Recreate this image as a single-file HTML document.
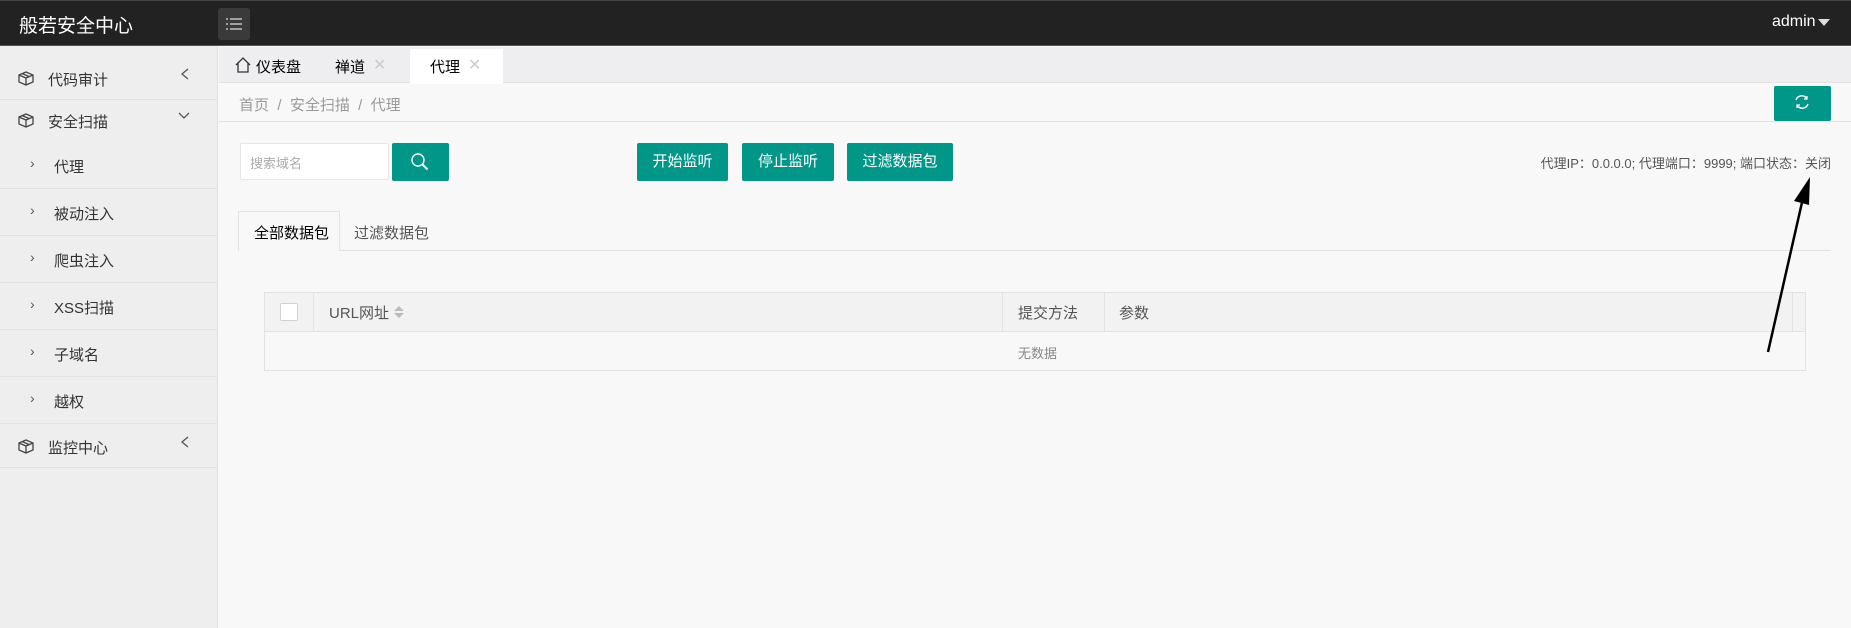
<!DOCTYPE html>
<html><head><meta charset="utf-8"><style>
*{box-sizing:border-box;margin:0;padding:0}
body{width:1851px;height:628px;overflow:hidden;background:#f8f8f8;font-family:"Liberation Sans","Noto Sans CJK SC",sans-serif;color:#333;position:relative}
.abs{position:absolute}
.hdr{left:0;top:0;width:1851px;height:46px;background:#222;border-top:1px solid #444;border-bottom:1px solid #555}
.side{left:0;top:46px;width:218px;height:582px;background:#eeeeee;border-right:1px solid #e0e0e0}
.btn{position:absolute;background:#009688;color:#fff;font-size:15px;text-align:center;border-radius:2px}
.line{position:absolute;background:#e2e2e2;height:1px}
</style></head><body>
<div class="abs hdr"></div>
<div class="abs" style="left:19px;top:11px;font-size:19px;color:#fff">般若安全中心</div>
<div class="abs" style="left:218px;top:8px;width:32px;height:32px;background:#3a3a3a;border-radius:3px"></div>
<svg class="abs" style="left:226px;top:17px" width="16" height="14"><g stroke="#ddd" stroke-width="1.3"><path d="M0 2h2M4 2h12M0 7h2M4 7h12M0 12h2M4 12h12"/></g></svg>
<div class="abs" style="left:1772px;top:13px;font-size:16px;color:#fff">admin</div>
<div class="abs" style="left:1818px;top:19px;width:0;height:0;border-left:6px solid transparent;border-right:6px solid transparent;border-top:7px solid #ddd"></div>

<div class="abs side"></div>
<div class="line" style="left:0;top:99px;width:218px"></div>
<div class="line" style="left:0;top:423px;width:218px"></div>
<div class="line" style="left:0;top:467px;width:218px"></div>
<div class="line" style="left:0;top:188px;width:218px"></div>
<div class="line" style="left:0;top:235px;width:218px"></div>
<div class="line" style="left:0;top:282px;width:218px"></div>
<div class="line" style="left:0;top:329px;width:218px"></div>
<div class="line" style="left:0;top:376px;width:218px"></div>
<svg class="abs" style="left:17px;top:70px" width="18" height="16"><path d="M2 5l7-3 7 3v7l-7 3-7-3zM2 5l7 3 7-3M9 8v7M5 3.5l7 3" fill="none" stroke="#444" stroke-width="1.3"/></svg>
<div class="abs" style="left:48px;top:69px;font-size:15px">代码审计</div>
<svg class="abs" style="left:181px;top:68px" width="8" height="12"><path d="M7 1L1 6l6 5" fill="none" stroke="#555" stroke-width="1.3"/></svg>
<svg class="abs" style="left:17px;top:112px" width="18" height="16"><path d="M2 5l7-3 7 3v7l-7 3-7-3zM2 5l7 3 7-3M9 8v7M5 3.5l7 3" fill="none" stroke="#444" stroke-width="1.3"/></svg>
<div class="abs" style="left:48px;top:111px;font-size:15px">安全扫描</div>
<svg class="abs" style="left:178px;top:112px" width="12" height="8"><path d="M1 1l5 5 5-5" fill="none" stroke="#555" stroke-width="1.3"/></svg>
<div class="abs" style="left:30px;top:155px;font-size:14px;color:#555">›</div><div class="abs" style="left:54px;top:156px;font-size:15px">代理</div>
<div class="abs" style="left:30px;top:202px;font-size:14px;color:#555">›</div><div class="abs" style="left:54px;top:203px;font-size:15px">被动注入</div>
<div class="abs" style="left:30px;top:249px;font-size:14px;color:#555">›</div><div class="abs" style="left:54px;top:250px;font-size:15px">爬虫注入</div>
<div class="abs" style="left:30px;top:296px;font-size:14px;color:#555">›</div><div class="abs" style="left:54px;top:297px;font-size:15px">XSS扫描</div>
<div class="abs" style="left:30px;top:343px;font-size:14px;color:#555">›</div><div class="abs" style="left:54px;top:344px;font-size:15px">子域名</div>
<div class="abs" style="left:30px;top:390px;font-size:14px;color:#555">›</div><div class="abs" style="left:54px;top:391px;font-size:15px">越权</div>
<svg class="abs" style="left:17px;top:438px" width="18" height="16"><path d="M2 5l7-3 7 3v7l-7 3-7-3zM2 5l7 3 7-3M9 8v7M5 3.5l7 3" fill="none" stroke="#444" stroke-width="1.3"/></svg>
<div class="abs" style="left:48px;top:437px;font-size:15px">监控中心</div>
<svg class="abs" style="left:181px;top:436px" width="8" height="12"><path d="M7 1L1 6l6 5" fill="none" stroke="#555" stroke-width="1.3"/></svg>

<div class="abs" style="left:219px;top:47px;width:1632px;height:36px;background:#eeeef0;border-bottom:1px solid #e2e2e2"></div>
<div class="abs" style="left:410px;top:49px;width:93px;height:35px;background:#fff"></div>
<svg class="abs" style="left:235px;top:57px" width="16" height="16"><path d="M1 8L8 1l7 7M3 6v9h10V6" fill="none" stroke="#333" stroke-width="1.3"/></svg>
<div class="abs" style="left:256px;top:56px;font-size:15px;color:#000">仪表盘</div>
<div class="abs" style="left:335px;top:56px;font-size:15px;color:#000">禅道</div>
<div class="abs" style="left:373px;top:55px;font-size:16px;color:#ccc">✕</div>
<div class="abs" style="left:430px;top:56px;font-size:15px;color:#000">代理</div>
<div class="abs" style="left:468px;top:55px;font-size:16px;color:#ccc">✕</div>

<div class="line" style="left:219px;top:121px;width:1632px"></div>
<div class="abs" style="left:239px;top:94px;font-size:15px;color:#999">首页 &nbsp;/ &nbsp;安全扫描 &nbsp;/ &nbsp;代理</div>
<div class="btn" style="left:1774px;top:86px;width:57px;height:35px"></div>
<svg class="abs" style="left:1793px;top:93px" width="18" height="18"><path d="M3 7a6 6 0 0 1 11-1M15 11a6 6 0 0 1-11 1" fill="none" stroke="#fff" stroke-width="1.4"/><path d="M14 3v3h-3M4 15v-3h3" fill="none" stroke="#fff" stroke-width="1.2"/></svg>

<div class="abs" style="left:240px;top:143px;width:149px;height:37px;background:#fff;border:1px solid #e6e6e6;border-radius:2px"></div>
<div class="abs" style="left:250px;top:153px;font-size:13px;color:#aaa">搜索域名</div>
<div class="btn" style="left:392px;top:143px;width:57px;height:38px"></div>
<svg class="abs" style="left:410px;top:152px" width="20" height="20"><circle cx="8" cy="8" r="6" fill="none" stroke="#fff" stroke-width="1.4"/><path d="M12.5 12.5l5 5" stroke="#fff" stroke-width="2"/></svg>
<div class="btn" style="left:637px;top:143px;width:91px;height:38px;line-height:38px">开始监听</div>
<div class="btn" style="left:742px;top:143px;width:92px;height:38px;line-height:38px">停止监听</div>
<div class="btn" style="left:847px;top:143px;width:106px;height:38px;line-height:38px">过滤数据包</div>
<div class="abs" style="right:20px;top:153px;font-size:13px;color:#555;text-align:right;white-space:nowrap">代理IP：0.0.0.0; 代理端口：9999; 端口状态：关闭</div>

<div class="line" style="left:238px;top:250px;width:1593px"></div>
<div class="abs" style="left:238px;top:211px;width:102px;height:40px;border:1px solid #e2e2e2;border-bottom:none;background:#f8f8f8"></div>
<div class="abs" style="left:254px;top:222px;font-size:15px;color:#000">全部数据包</div>
<div class="abs" style="left:354px;top:222px;font-size:15px;color:#555">过滤数据包</div>

<div class="abs" style="left:264px;top:292px;width:1542px;height:79px;border:1px solid #e2e2e2;background:#f8f8f8"></div>
<div class="abs" style="left:265px;top:293px;width:1540px;height:39px;background:#f2f2f2;border-bottom:1px solid #e2e2e2"></div>
<div class="abs" style="left:313px;top:293px;width:1px;height:39px;background:#e2e2e2"></div>
<div class="abs" style="left:1002px;top:293px;width:1px;height:39px;background:#e2e2e2"></div>
<div class="abs" style="left:1104px;top:293px;width:1px;height:39px;background:#e2e2e2"></div>
<div class="abs" style="left:1792px;top:293px;width:1px;height:39px;background:#e2e2e2"></div>
<div class="abs" style="left:280px;top:303px;width:18px;height:18px;background:#fff;border:1px solid #d2d2d2;border-radius:2px"></div>
<div class="abs" style="left:329px;top:302px;font-size:15px;color:#555">URL网址</div>
<svg class="abs" style="left:394px;top:305px" width="10" height="14"><path d="M0 6l5-5 5 5zM0 8l5 5 5-5z" fill="#bbb"/></svg>
<div class="abs" style="left:1018px;top:302px;font-size:15px;color:#555">提交方法</div>
<div class="abs" style="left:1119px;top:302px;font-size:15px;color:#555">参数</div>
<div class="abs" style="left:1018px;top:343px;font-size:13px;color:#888">无数据</div>

<svg class="abs" style="left:1760px;top:170px" width="60" height="190"><path d="M8 182L43 28" stroke="#000" stroke-width="2.5"/><path d="M50 7L34 31l15 4z" fill="#000"/></svg>
</body></html>
